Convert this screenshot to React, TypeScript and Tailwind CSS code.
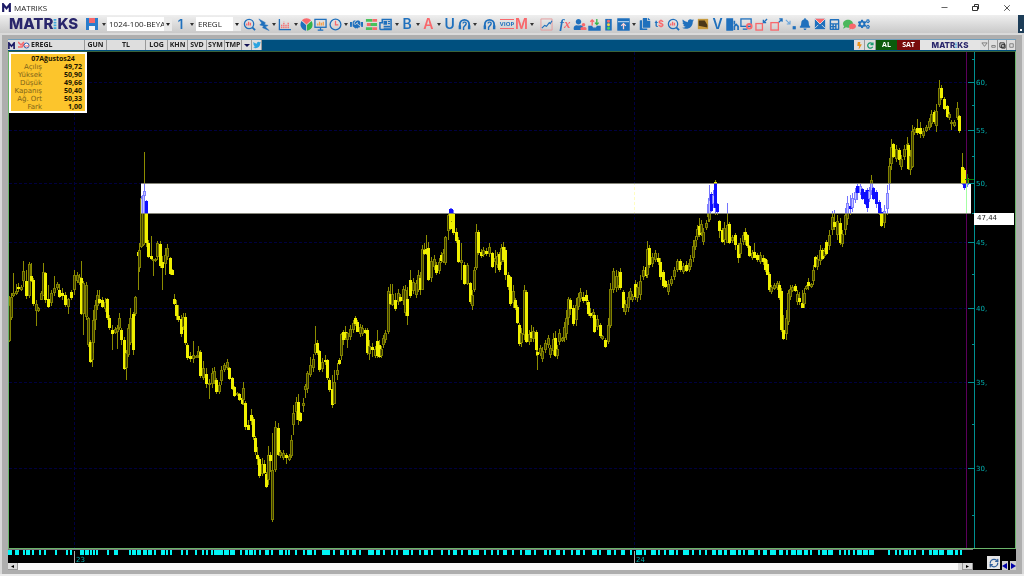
import clsx from 'clsx'
import type { ReactNode } from 'react'
import {
  FaHandshake,
  FaUser,
  FaTwitter,
  FaBell,
  FaCalculator,
  FaComment,
  FaCogs,
  FaCopy,
  FaBolt,
} from 'react-icons/fa'
import { RefreshCw, Minus, X } from 'lucide-react'

const BLUE = '#1f70bd'
const RED = '#f8686c'

// x high low [bodyTop bodyBottom [f = filled]]
const SERIES = `
9 296 342 305 341;11 293 320 297 318;13 273 297 293 296;16 284 295 291 294;18 283 292 287 289 f;21 285 291;23 261 287 271 281
26 270 299 281 296 f;29 262 298 264 296;31 263 282 276 281 f;33 278 306 280 304 f;36 300 326 304 311;38 307 312;41 291 300 293 300
43 263 295 272 296;45 272 303 273 300 f;48 285 308 299 307 f;51 290 306 293 303;54 276 296 288 293;57 282 290;59 284 298 290 297 f
62 288 300 293 296 f;65 292 307 295 305 f;68 298 314 299 307;71 290 300 292 298 f;74 270 295 275 290;77 272 283;79 274 285
81 261 315 278 314 f;83 281 335 283 314;86 282 320 285 317;88 317 347 318 345;90 340 363 342 362 f;92 333 367;93 310 353 320 343
95 300 330 305 320;97 290 310;99 290 304 299 303 f;102 297 308 300 307 f;105 298 312;107 298 320 299 318 f;109 315 330 318 328 f
112 325 350 330 334 f;115 327 334;117 325 349 328 332;119 313 330 318 328;121 328 345 330 340 f;124 337 370 340 369 f
126 350 380 353 368;128 324 357 328 355;130 308 345 318 343;133 312 355 314 350 f;135 296 316 297 314
138 250 290 252 256 f;139 243 272 250 268;141 196 248 198 247;143 193 246 195 245;144 152 197 191 196;146 200 247 201 243 f
148 240 258 243 257 f;151 236 260 256 259 f;153 259 276 259 261;155 258 262;157 241 260 243 257;160 241 268 244 266 f
162 256 290 262 268 f;165 248 275 255 264;167 244 260;170 257 275 258 274 f;172 269 275 270 275 f;174 294 305 299 304 f
176 300 320 305 316 f;178 305 322 316 320 f;181 315 337 319 334 f;183 313 330;185 313 345 317 343 f;187 343 360 345 358 f
190 352 362 356 359 f;193 341 363 355 359;196 355 357;198 346 358 351 356;200 350 378 352 376 f;203 361 380 368 378
206 368 388 374 384 f;209 379 399 383 385;212 368 388 373 384;214 367 384;216 378 394 380 392 f;219 382 394;221 366 385 370 381
224 363 372;227 359 370;229 367 380 368 379 f;232 377 390 378 389 f;234 386 397 387 396 f;237 392 396;239 393 401 394 400 f
242 397 405 398 404 f;243 382 405;245 401 430 403 427 f;248 420 430 425 430 f;251 409 425 415 421 f;253 417 440 419 437 f
255 436 455 438 452 f;257 447 465 455 459 f;259 457 478 459 476 f;262 458 476 464 474;264 460 474 464 473 f;266 472 488 474 487 f
268 446 485 455 480;270 452 472 455 461 f;272 433 522 470 520;275 421 472 427 470;278 423 456 428 455 f;280 450 458;283 450 460
286 453 464 455 458 f;289 454 461;291 435 458 440 456;293 405 435 413 425;296 397 420 402 412;298 394 425 402 420 f
300 412 422 413 421 f;303 398 412 403 406;305 384 398 386 390;307 371 393 373 389;310 357 377 365 375;313 354 372;315 326 355 344 353
317 340 355 343 353 f;319 350 372 351 370 f;322 358 372;325 355 365 360 362 f;327 359 380 360 378 f;329 378 392 380 390 f
332 375 408 389 405 f;334 370 404 382 404;337 363 380 370 375;339 358 365 360 364 f;341 333 360 334 356;343 330 345 332 340 f
345 326 340 332 338 f;347 332 348 333 340;350 325 340;353 320 333;355 316 326 318 324 f;357 320 332 322 332 f;360 324 337
362 325 336;365 328 334 330 333 f;367 328 355 330 353 f;369 340 360 346 354;372 343 357 347 350 f;375 346 358 349 356
377 330 358 341 356 f;379 340 358 345 357 f;381 346 358;383 335 348;385 330 343;388 287 334 291 332;390 284 305 294 304 f
392 284 306 294 305;395 293 311 300 309 f;398 289 305;400 294 302 297 301 f;403 286 305 289 301;405 285 316 290 313
407 287 325 299 316 f;410 270 298 280 296 f;413 278 294;416 280 298 283 295;418 270 292 275 290;420 272 295 278 290 f
422 245 290 249 290;424 243 255 250 254 f;426 235 255 249 254 f;428 242 281 248 280 f;431 257 282 261 278;434 255 270
436 262 275 265 273 f;439 258 274;441 252 263 255 261 f;443 249 263 253 262;445 236 265 237 263;448 213 240 215 231
450 208 230 209 229 f;451 208 222 209 221 f;453 210 235 213 233 f;456 228 243 232 241 f;458 237 263 240 262 f;461 243 280 260 263
464 262 285 265 284 f;467 263 285 265 284;470 282 304 283 302 f;472 290 310;474 267 292 270 290;476 224 270 232 268
478 230 255 232 253 f;481 249 258 252 256 f;483 247 257;486 248 256 251 254 f;489 243 257;492 252 268 253 267 f;495 250 273 258 262
497 252 268;499 252 272 254 270 f;501 244 265 248 262;503 242 262 247 260 f;505 247 280 250 275 f;508 272 290 275 287 f
510 276 306 277 304 f;513 285 308;515 298 310 300 308 f;517 305 324 307 323 f;519 323 346 325 344 f;521 328 347;524 285 340 290 335
526 290 343 292 342 f;529 330 345;531 325 342 332 338 f;533 327 342;536 330 356 332 350 f;537 350 370 352 355 f;540 345 356;542 347 362
545 340 353;548 335 348;550 345 358;553 333 355;555 331 357 338 356 f;557 345 359;559 329 345;562 337 342;564 322 342;566 310 340
568 297 325 299 318;570 298 315 300 309 f;573 305 326 308 324 f;576 298 326;578 293 310;580 288 302;583 292 303 297 301 f
586 290 305 295 301 f;588 300 316 302 314 f;590 308 318 313 316 f;593 309 320;594 313 333 315 332 f;597 315 330;600 323 338 325 336 f
602 335 340;605 338 348 340 347 f;608 318 344 325 342;610 283 328 289 326;613 268 293 271 290;616 270 292;618 271 290
620 268 290 272 288 f;623 290 312 292 308 f;625 300 315;628 292 312;630 288 300;632 294 302;635 280 300 284 297 f;637 282 302
640 275 300;643 266 280;646 262 278 267 276 f;647 241 278 249 275;649 245 268 248 265 f;652 253 267;655 250 262;658 253 265 258 262 f
660 258 280 262 277 f;663 270 288 272 286 f;665 280 288 281 287 f;668 280 295;671 276 286;674 267 280;677 259 272 261 270
680 259 272 261 270 f;683 263 274;686 261 272 265 271 f;689 260 272;690 255 270;693 240 262;695 236 250;697 225 240
699 218 237 226 235 f;701 220 236;703 228 245;706 220 230;708 198 222;709 185 222 200 220;711 192 212 194 211 f;713 190 208
715 180 215 182 208 f;717 203 215 204 212 f;719 220 238 221 231 f;722 228 243 230 242 f;724 222 245;727 203 243 225 243
729 222 244 224 243 f;732 235 243;735 233 250 235 245 f;738 243 263 245 258 f;740 238 258;743 232 245;745 228 245 232 240 f
747 234 248 235 246 f;749 245 257 246 256 f;752 250 260;754 243 258 252 258 f;757 253 262 255 260 f;760 252 264;763 255 265 258 262 f
765 258 272 259 270 f;767 260 275 264 275 f;769 272 292 274 290 f;771 285 294;774 283 290;777 281 290;779 281 300 285 298 f
781 288 332 291 330 f;783 315 340 330 339 f;786 310 340;788 290 325 293 322;790 285 300;792 285 292;795 284 292 286 291 f;797 290 305
799 292 305 298 302 f;802 290 308 303 308 f;804 288 308;806 285 290;808 278 290 282 286 f;811 283 288;813 265 285;815 256 268 257 267 f
817 255 270;820 245 265;822 248 260 250 259 f;824 248 258;826 240 255 242 254 f;829 230 250;832 211 235;834 210 230 222 227 f
837 215 240;840 218 245 223 243 f;842 230 247;845 208 235;847 196 225;850 195 215 206 209 f;852 193 212;855 188 203
857 183 200 186 193 f;860 183 195;862 188 200 189 199 f;865 190 205 192 204 f;867 188 212 190 208 f;869 187 202;871 175 195
873 187 200 188 199 f;876 190 208 192 204 f;879 200 215 202 214 f;881 208 227 212 226 f;884 205 228;887 185 215;889 158 190;891 139 170
893 143 158 144 157 f;896 145 162;899 148 165 150 160 f;901 155 170;904 145 160;907 137 155 144 150;908 143 170 145 169 f;910 150 175
912 125 168 131 167;914 127 135;917 119 135 128 133 f;920 122 138 128 134 f;923 128 138;926 125 132;929 118 130;931 110 127
934 110 124 112 122 f;936 104 132;939 80 107 88 105;941 85 100 88 98 f;944 97 110 99 109 f;947 105 118 106 117 f;949 112 120
951 120 130 122 124;954 120 127;957 102 120 108 118;959 115 133 116 131 f;962 153 185 167 183 f;964 168 190 170 188 f;967 175 187
`

const candles = SERIES.trim()
  .split(/[;\n]/)
  .map((row) => {
    const p = row.split(' ')
    const [x, high, low] = p.map(Number)
    const h = low - high
    return {
      x,
      high,
      low,
      top: p[3] ? Number(p[3]) : high + Math.round(h * 0.25),
      bottom: p[4] ? Number(p[4]) : low - Math.round(h * 0.2),
      filled: p[5] === 'f',
    }
  })

const levels = [
  { y: 82, label: '60,' },
  { y: 130, label: '55,' },
  { y: 183, label: '50,' },
  { y: 242, label: '45,' },
  { y: 308, label: '40,' },
  { y: 382, label: '35,' },
  { y: 468, label: '30,' },
]
const minorTicks = [59, 105, 156, 213, 274, 344, 424, 515]

// start-end of each session marker on the time strip
const sessions =
  '8-12 15-19 23-25 26-30 32-34 39-41 44-46 55-57 66-68 70-72 80-84 85-89 90-92 93-95 96-98 107-109 114-118 129-131 132-136 137-141 143-147 148-152 154-156 161-165 166-168 170-172 181-183 186-188 195-197 202-204 206-208 211-213 214-223 224-229 230-235 240-242 245-248 249-253 254-256 259-261 265-269 271-273 279-283 285-287 288-290 295-297 303-305 307-312 314-316 322-330 333-335 340-344 347-349 352-356 359-361 368-374 376-380 383-385 391-393 396-398 403-409 411-413 419-421 424-428 431-433 441-443 448-450 453-457 461-463 468-471 473-479 484-486 491-493 497-499 503-507 512-514 520-522 525-531 534-536 544-547 549-551 556-560 563-565 571-573 576-580 583-585 592-597 599-601 607-611 614-616 621-625 630-632 636-642 644-646 651-656 658-660 664-666 669-674 676-678 683-689 692-694 699-701 705-707 712-716 718-722 724-727 730-736 738-741 743-745 748-754 758-760 763-767 770-776 779-783 786-788 791-796 797-802 804-808 810-812 818-820 822-827 828-833 839-841 844-846 848-850 853-855 857-862 863-868 869-874 888-890 895-897 899-901 904-908 909-911 914-916 922-924 929-932 933-938 939-944 947-953 955-958 960-962'
    .split(' ')
    .map((s) => s.split('-').map(Number))

const quote = [
  ['Açılış', '49,72'],
  ['Yüksek', '50,90'],
  ['Düşük', '49,66'],
  ['Kapanış', '50,40'],
  ['Ağ. Ort', '50,33'],
  ['Fark', '1,00'],
]

const Glyph = ({ children }: { children: ReactNode }) => (
  <svg viewBox="0 0 14 14" className="size-[13px]" fill="none" stroke={BLUE} strokeWidth="1.4">
    {children}
  </svg>
)

const Letter = ({ children, className }: { children: ReactNode; className?: string }) => (
  <span className={clsx('font-["Inter"] text-[14px] leading-[14px] font-semibold text-[#1f70bd]', className)}>{children}</span>
)

const Headset = () => (
  <Glyph>
    <path d="M2 10V7a5 5 0 0 1 10 0v3" strokeWidth="2" />
    <path d="M2 8v4M12 8v4" strokeWidth="2.600" />
    <path d="M5.500 6q0-2 2-1.500T8.500 7L6 10v3" strokeWidth="1.500" />
  </Glyph>
)

const Magnifier = () => (
  <Glyph>
    <circle cx="6.5" cy="6.5" r="5" />
    <path d="M10 10l3 3" strokeWidth="2" />
    <path d="M4 8V6M6 8V4M8 8V5" stroke={RED} />
  </Glyph>
)

type Tool = { label: string; icon: ReactNode; menu?: boolean }

const chartTools: Tool[] = [
  { label: 'İncele', icon: <Magnifier /> },
  {
    label: 'Çizim',
    menu: true,
    icon: (
      <Glyph>
        <path d="M2 1l7 4-1 2 4 1-3 1.500 4 4-7-3 1-2-4-1 2-2z" fill={BLUE} strokeWidth="0.500" />
      </Glyph>
    ),
  },
  {
    label: 'Gösterge',
    menu: true,
    icon: (
      <Glyph>
        <path d="M1.5 1v11.5H14" />
        <path d="M4 11V7M6.3 11V4M8.6 11V7M11 11V5" stroke={RED} strokeDasharray="1.5 0.7" />
      </Glyph>
    ),
  },
  {
    label: 'Dağılım',
    icon: (
      <svg viewBox="0 0 14 14" className="size-[13px]">
        <path d="M7 7L2 2.5a7 7 0 0 1 10 0z" fill={RED} />
        <path d="M6.5 7.5L1.6 3.2a7 7 0 0 0 4.9 10.6z" fill={BLUE} />
        <path d="M7.5 7.5l5-4.3a7 7 0 0 1-5 10.6z" fill="#34b44a" />
      </svg>
    ),
  },
  {
    label: 'Ekran',
    icon: (
      <Glyph>
        <rect x="1" y="1.5" width="12" height="8.5" />
        <path d="M4 13h6M7 10v3" />
        <path d="M4 8V6M6 8V4M8 8V5M10 8V4" stroke="#f3a04c" />
      </Glyph>
    ),
  },
  {
    label: 'Periyot',
    menu: true,
    icon: (
      <Glyph>
        <circle cx="7" cy="7" r="5.8" />
        <path d="M7 3v4.5h3" stroke={RED} />
      </Glyph>
    ),
  },
  { label: 'Anlaşma', icon: <FaHandshake size={13} color={BLUE} /> },
  {
    label: 'Derinlik',
    icon: (
      <svg viewBox="0 0 14 14" className="size-[13px]">
        <path d="M1 1h7v3H1zM5 5.500h8v3H5zM1 10h7v3H1z" fill="#49c25b" />
        <path d="M8 1h5v3H8zM2 5.500h4v3H2zM8 10h5v3H8z" fill={RED} />
      </svg>
    ),
  },
  {
    label: 'Haber',
    menu: true,
    icon: (
      <Glyph>
        <path d="M3.500 1.500h9.500v11H2q-1 0-1-1V5h2.500z" strokeWidth="1.600" />
        <path d="M5.500 4h2.500v2.500H5.500z" fill={BLUE} />
        <path d="M9.500 4H12M9.500 6H12M5 9h7M5 11h7" />
      </Glyph>
    ),
  },
  { label: 'B', menu: true, icon: <Letter>B</Letter> },
  { label: 'A', menu: true, icon: <Letter className="text-[#f8686c]">A</Letter> },
  { label: 'U', icon: <Letter>U</Letter> },
  { label: 'Destek', menu: true, icon: <Headset /> },
]

const marketTools: Tool[] = [
  {
    label: 'VIOP',
    icon: (
      <span className="border-y border-[#f8686c] font-['Open_Sans'] text-[6px] leading-[8px] font-bold text-[#1f70bd]">
        VIOP
      </span>
    ),
  },
  { label: 'M', menu: true, icon: <Letter className="text-[12px] font-extrabold text-[#f8686c]">M</Letter> },
]

const appTools: Tool[] = [
  {
    label: 'Fonksiyon',
    icon: (
      <span className="font-['Liberation_Serif'] text-[13px] leading-[14px] font-bold text-[#1f70bd] italic">
        f<span className="text-[#f8686c]">x</span>
      </span>
    ),
  },
  {
    label: 'Kullanıcılar',
    icon: (
      <span className="flex items-end">
        <FaUser size={11} color={BLUE} className="shrink-0" />
        <FaUser size={7} color={RED} className="-ml-[4px] shrink-0" />
      </span>
    ),
  },
  {
    label: 'Aktar',
    icon: (
      <Glyph>
        <path d="M1 9h3l1 2h4l1-2h3v4H1z" fill={BLUE} />
        <path d="M4.5 8V2M2.5 4l2-2 2 2" stroke={RED} />
        <path d="M9.5 1v6M7.5 5l2 2 2-2" stroke="#34b44a" />
      </Glyph>
    ),
  },
  {
    label: 'Sinyal',
    icon: (
      <svg viewBox="0 0 14 14" className="size-[13px]">
        <rect x="3.500" y="1" width="7" height="12.500" fill={BLUE} />
        <circle cx="7" cy="3.500" r="1.600" fill={RED} />
        <circle cx="7" cy="7.200" r="1.600" fill="#ffd23c" />
        <circle cx="7" cy="11" r="1.600" fill="#49d25b" />
      </svg>
    ),
  },
  {
    label: 'Yükle',
    menu: true,
    icon: (
      <Glyph>
        <rect x="1" y="1" width="12" height="12" fill={BLUE} />
        <path d="M1 4h12" stroke="#dceaf8" strokeWidth="1" />
        <path d="M7 12V6M4.5 8.5L7 6l2.500 2.500" stroke="#ffd3d3" />
      </Glyph>
    ),
  },
  { label: 'Kopyala', icon: <FaCopy size={12} color={BLUE} /> },
  {
    label: 'Çevir',
    icon: (
      <span className="font-['Inter'] text-[9px] leading-[14px] font-bold text-[#1f70bd]">
        t<span className="text-[#f8686c]">$</span>
      </span>
    ),
  },
  { label: 'Ara', icon: <Magnifier /> },
  { label: 'Twitter', icon: <FaTwitter size={12} color={BLUE} /> },
  {
    label: 'Altın',
    icon: (
      <svg viewBox="0 0 14 14" className="size-[12px]">
        <path d="M1 1h12v12H1z" fill="#c79a3e" />
        <path d="M2 9V3h7l3 5v3z" fill="#4a3818" />
      </svg>
    ),
  },
  { label: 'V', icon: <Letter className="text-[13px] font-extrabold">V</Letter> },
  {
    label: 'Şirket',
    icon: (
      <Glyph>
        <path d="M1 1h6v12H1z" fill={BLUE} />
        <path d="M9 3v4M9 13V9l2-2 2 2v4" strokeWidth="1.800" />
      </Glyph>
    ),
  },
  {
    label: 'Kayıt',
    icon: (
      <Glyph>
        <rect x="1" y="1" width="11" height="8" />
        <path d="M3 12h5" />
        <circle cx="10" cy="9" r="2.500" stroke={RED} strokeWidth="2" />
      </Glyph>
    ),
  },
  {
    label: 'Küçült',
    icon: (
      <Glyph>
        <rect x="1" y="6" width="7" height="7" stroke={RED} />
        <path d="M13 1L9.500 4.500M9 2v3h3" />
      </Glyph>
    ),
  },
  {
    label: 'Büyüt',
    icon: (
      <Glyph>
        <rect x="1" y="5" width="8" height="8" stroke={RED} />
        <path d="M9.500 4.500L13 1M10 1h3v3" />
      </Glyph>
    ),
  },
  {
    label: 'Taşı',
    icon: (
      <Glyph>
        <path d="M2 2l4 4M6.500 3v3.500H3" stroke="#6aa5dc" strokeWidth="1.200" />
        <rect x="10" y="9.500" width="2" height="2" fill={BLUE} />
      </Glyph>
    ),
  },
  { label: 'Alarm', icon: <FaBell size={12} color={BLUE} /> },
  {
    label: 'Mesaj',
    icon: (
      <svg viewBox="0 0 14 14" className="size-[12px]">
        <path d="M1 1h12v12H1z" fill={BLUE} />
        <path d="M1 1h12L7 7z" fill={RED} />
        <path d="M1 1l6 6 6-6M1 12l4-4M13 12L9 8" stroke="#e8e8e8" fill="none" />
      </svg>
    ),
  },
  { label: 'Hesap', icon: <FaCalculator size={11} color={BLUE} /> },
  {
    label: 'Sohbet',
    icon: (
      <span className="flex items-start">
        <FaComment size={10} color="#4cb85c" className="shrink-0" />
        <FaComment size={7} color={RED} className="mt-[4px] -ml-[4px] shrink-0" />
      </span>
    ),
  },
  { label: 'Ayarlar', icon: <FaCogs size={12} color={BLUE} /> },
]

const Caret = ({ label }: { label: string }) => (
  <button aria-label={label} className="flex w-[6px] shrink-0 justify-center">
    <svg viewBox="0 0 4 3" className="h-[3px] w-[4px]">
      <path d="M0 0h4L2 3z" fill="#333" />
    </svg>
  </button>
)

const Tools = ({ items, className }: { items: Tool[]; className: string }) => (
  <div className={clsx('flex shrink-0 items-center justify-between', className)}>
    {items.map(({ label, icon, menu }) => (
      <div key={label} className="contents">
        <button aria-label={label} className="flex h-[14px] w-[14px] shrink-0 items-center justify-center">
          {icon}
        </button>
        {menu && <Caret label={`${label} menüsü`} />}
      </div>
    ))}
  </div>
)

const Logo = ({ small }: { small?: boolean }) => (
  <span
    className={clsx(
      'flex items-center font-["Inter"] font-extrabold text-[#29266b]',
      small ? 'text-[8px] leading-[10px]' : 'text-[15px] leading-[16px]',
    )}
  >
    MATR
    <svg viewBox="0 0 4 12" className={small ? 'h-[7px] w-[2px]' : 'h-[11px] w-[4px]'}>
      <path d="M2 0v12" stroke="#3fa9e0" strokeWidth="3" strokeDasharray="2 1" />
    </svg>
    KS
  </span>
)

const MMark = ({ className }: { className: string }) => (
  <svg viewBox="0 0 10 10" className={className}>
    <path d="M1.300 10V1.500L5 6l3.700-4.500V10" fill="none" stroke="#1d1b66" strokeWidth="2.400" />
  </svg>
)

const Picker = ({ label, value, className }: { label: string; value: string; className: string }) => (
  <label className={clsx('flex h-[14px] shrink-0 items-center bg-white', className)}>
    <select
      aria-label={label}
      defaultValue={value}
      className="h-[14px] min-w-0 flex-1 appearance-none overflow-hidden pl-[2px] text-[8px] leading-[14px] text-clip text-[#222]"
    >
      <option>{value}</option>
    </select>
    <span className="flex h-full w-[8px] items-center justify-center bg-[#e9e9e9]">
      <svg viewBox="0 0 4 3" className="h-[3px] w-[4px]">
        <path d="M0 0h4L2 3z" fill="#222" />
      </svg>
    </span>
  </label>
)

const TitleBar = () => (
  <header className="flex h-[15px] items-center bg-white pr-[12px] pl-[2px]">
    <MMark className="size-[9px]" />
    <h1 className="ml-[3px] flex-1 text-[8px] leading-[12px] text-[#222]">MATRIKS</h1>
    <div className="flex items-center gap-[22px] text-[#333]">
      <button aria-label="Simge durumuna küçült">
        <Minus size={9} strokeWidth={2} />
      </button>
      <button aria-label="Önceki boyut">
        <svg viewBox="0 0 9 9" className="size-[9px]" fill="none" stroke="#333">
          <path d="M1.500 3.500h5v4h-5zM3.500 3V1.500h4v4.500H7" />
        </svg>
      </button>
      <button aria-label="Kapat">
        <X size={10} strokeWidth={2} />
      </button>
    </div>
  </header>
)

const Toolbar = () => (
  <div className="flex h-[18px] items-center bg-gradient-to-b from-[#efefef] to-[#c9c9c9] pl-[9px]">
    <div className="w-[77px] shrink-0">
      <Logo />
    </div>
    <button aria-label="Kaydet" className="shrink-0">
      <svg viewBox="0 0 12 12" className="size-[12px]">
        <path d="M0 0h12v12H0z" fill="#2a7dcc" />
        <path d="M3 0h6v5H3z" fill={RED} />
        <path d="M3 8h6v4H3z" fill="#f4f4f4" />
      </svg>
    </button>
    <div className="flex w-[9px] justify-end">
      <Caret label="Kaydet menüsü" />
    </div>
    <Picker label="Sayfa" value="1024-100-BEYA" className="w-[65px]" />
    <button className="w-[17px] shrink-0 font-['Inter'] text-[13px] leading-[14px] font-semibold text-[#1f70bd]">1</button>
    <Caret label="Sayfa sayısı" />
    <Picker label="Sembol" value="EREGL" className="ml-[1px] w-[45px]" />
    <Tools items={chartTools} className="ml-[1px] w-[236px]" />
    <Tools items={[{ label: 'Canlı destek', icon: <Headset /> }]} className="ml-[4px]" />
    <Tools items={marketTools} className="ml-[4px] w-[35px]" />
    <Tools
      items={[
        {
          label: 'Grafik',
          icon: (
            <Glyph>
              <path d="M1 1v12h12V1z" stroke="#e59a9c" strokeWidth="1" />
              <path d="M2 11l3-3 2 1 3-4 1 1 2-3" strokeWidth="1.200" />
            </Glyph>
          ),
        },
      ]}
      className="ml-[4px]"
    />
    <Tools items={appTools} className="ml-[5px] w-[313px]" />
    <div className="ml-auto flex h-full w-[6px] items-end justify-center bg-[#1d3d58] pb-[2px]">
      <span className="size-[2px] bg-white" />
    </div>
  </div>
)

const cell =
  'flex h-[10px] shrink-0 items-center justify-center border-r border-[#999] bg-[#dedede] text-[7px] leading-[10px] font-bold text-[#222]'

const ChartHeader = () => (
  <div className="flex h-[12px] items-start border-t border-[#6f9fbe] bg-[#00507f]">
    <div className={clsx(cell, 'w-[77px] justify-start! gap-[1px]')}>
      <MMark className="mr-[2px] size-[7px]" />
      <svg viewBox="0 0 12 8" className="h-[8px] w-[12px]">
        <path d="M0 1l3 3 3-3M0 6h4l2-3" stroke={RED} strokeWidth="1.500" fill="none" />
        <circle cx="8.500" cy="4.500" r="2.500" fill="#fff" stroke="#2c56a6" />
        <path d="M7 5h4" stroke={RED} />
      </svg>
      EREGL
    </div>
    <button className={clsx(cell, 'w-[22px]')}>GUN</button>
    <button className={clsx(cell, 'w-[39px]')}>TL</button>
    <button className={clsx(cell, 'w-[22px]')}>LOG</button>
    <button className={clsx(cell, 'w-[20px]')}>KHN</button>
    <button className={clsx(cell, 'w-[19px]')}>SVD</button>
    <button className={clsx(cell, 'w-[18px]')}>SYM</button>
    <button className={clsx(cell, 'w-[17px]')}>TMP</button>
    <button aria-label="Menü" className={clsx(cell, 'w-[10px]')}>
      <svg viewBox="0 0 6 3" className="h-[3px] w-[6px]">
        <path d="M0 0h6L3 3z" fill="#111155" />
      </svg>
    </button>
    <button aria-label="Paylaş" className={clsx(cell, 'w-[10px]')}>
      <FaTwitter size={8} color="#2aa3e0" />
    </button>
    <div className="flex-1" />
    <button aria-label="Hızlı emir" className={clsx(cell, 'w-[11px]')}>
      <FaBolt size={7} color="#e8941a" />
    </button>
    <button aria-label="Yenile" className={clsx(cell, 'w-[11px]')}>
      <svg viewBox="0 0 8 8" className="size-[7px]" fill="none" stroke="#169a70" strokeWidth="1.500">
        <path d="M6.500 5.500a3 3 0 1 1-.5-3.500M6.800.5v2.500H4" />
      </svg>
    </button>
    <button className="h-[10px] w-[21px] shrink-0 bg-[#0c5a0c] text-[7px] leading-[10px] font-bold text-white">AL</button>
    <button className="h-[10px] w-[23px] shrink-0 bg-[#780c0c] text-[7px] leading-[10px] font-bold text-white">SAT</button>
    <div className="flex h-[10px] w-[60px] shrink-0 items-center justify-center bg-[#e4e4e4]">
      <Logo small />
    </div>
    {['M1 1h6L4 5z', 'M2 4h4v2H2z', 'M1 1h5v5H1zM3 3h4v4H3z', 'M2 2h4v4H2z'].map((d, i) => (
      <button key={d} aria-label={`Pencere ${i + 1}`} className={clsx(cell, 'w-[9px]')}>
        <svg viewBox="0 0 8 8" className="size-[7px]" fill="none" stroke={i === 2 ? '#222' : '#777'}>
          <path d={d} />
        </svg>
      </button>
    ))}
  </div>
)

const QuoteBox = () => (
  <table
    aria-label="EREGL günlük özet"
    className="absolute top-0 left-0 w-[78px] border-separate border-spacing-0 border-2 border-white bg-[#fcc52c] text-[7px] leading-[8px] text-[#1a1400]"
  >
    <thead>
      <tr className="h-[9px]">
        <th colSpan={2} className="p-0 pl-[10px] text-center font-bold">
          07Ağustos24
        </th>
      </tr>
    </thead>
    <tbody>
      {quote.map(([name, value]) => (
        <tr key={name} className="h-[8px]">
          <th scope="row" className="w-[31px] p-0 text-right font-['DejaVu_Sans'] font-normal text-[#80641a]">
            {name}
          </th>
          <td className="p-0 pr-[3px] text-right font-bold">{value}</td>
        </tr>
      ))}
    </tbody>
  </table>
)

const PriceChart = () => (
  <svg viewBox="9 52 1006 496" className="block h-auto w-full bg-black" role="img" aria-label="EREGL günlük fiyat grafiği">
    <rect x="9" y="52" width="1006" height="496" fill="#000" />
    <g stroke="#000040" strokeDasharray="3 2" shapeRendering="crispEdges">
      {levels.map(({ y }) => (
        <path key={y} d={`M9 ${y + 0.5}H974`} />
      ))}
      <path d="M74.5 52V548M634.5 52V548" />
    </g>
    <g shapeRendering="crispEdges">
      {candles.map(({ x, high, low, top, bottom, filled }, i) => (
        <g key={i}>
          <rect x={x} y={high} width="1" height={low - high} fill="#8c8c00" />
          <rect x={x - 1} y={top} width="3" height={Math.max(bottom - top, 2)} fill={filled ? '#f0f000' : '#808000'} />
          {!filled && <rect x={x} y={top + 1} width="1" height={Math.max(bottom - top - 2, 0)} fill="#3c3c00" />}
        </g>
      ))}
      <rect x="966" y="52" width="1" height="496" fill="#5c005c" />
      <path d="M967.5 174V183M965 179.5H974" stroke="#008000" />
      {/* highlighted price zone inverts everything under it */}
      <rect x="141" y="183" width="830" height="30" fill="#fff" className="mix-blend-difference" />
      <path d="M141 183.5H971M141 213.500H971" stroke="#85857a" />
      <rect x="974" y="52" width="1" height="496" fill="#009090" />
      {levels.map(({ y }) => (
        <rect key={y} x="968" y={y} width="6" height="1" fill="#009090" />
      ))}
      {minorTicks.map((y) => (
        <rect key={y} x="972" y={y} width="2" height="1" fill="#009090" />
      ))}
      <rect x="974" y="213" width="40" height="12" fill="#fff" />
    </g>
    <g className="font-['DejaVu_Sans'] text-[7px]" fill="#00b0b0">
      {levels.map(({ y, label }) => (
        <text key={y} x="976" y={y + 3}>
          {label}
        </text>
      ))}
      <text x="977" y="220" fill="#222">
        47,44
      </text>
    </g>
  </svg>
)

const TimeStrip = () => (
  <svg viewBox="8 549 965 14" className="block h-auto w-full bg-black" role="img" aria-label="Zaman ekseni">
    <path d="M8 549.500H973" stroke="#777" />
    <g fill="#00f4f4" shapeRendering="crispEdges">
      {sessions.map(([from, to]) => (
        <rect key={from} x={from} y="550" width={to - from} height="5" />
      ))}
    </g>
    <path d="M74.500 551V563M634.500 551V563" stroke="#aaa" />
    <g className="font-['DejaVu_Sans'] text-[7px]" fill="#00b0b0">
      <text x="76" y="562">
        23
      </text>
      <text x="636" y="562">
        24
      </text>
    </g>
  </svg>
)

const ScrollBar = () => (
  <div className="flex h-[7px] bg-[#fafafa]">
    <button aria-label="Sola kaydır" className="flex w-[10px] items-center justify-center border-r border-b border-[#999] bg-[#dcdcdc]">
      <svg viewBox="0 0 3 3" className="size-[3px]">
        <path d="M3 0v3L0 1.500z" />
      </svg>
    </button>
    <div className="flex-1" />
    <div className="w-[5px] border-r border-[#999] bg-[#dcdcdc]" />
    <button aria-label="Sağa kaydır" className="flex w-[10px] items-center justify-center border-r border-b border-[#999] bg-[#dcdcdc]">
      <svg viewBox="0 0 3 3" className="size-[3px]">
        <path d="M0 0v3l3-1.500z" />
      </svg>
    </button>
  </div>
)

export default function App() {
  return (
    <div className="bg-[#ececec] pb-[2px] font-['Open_Sans',sans-serif]">
      <TitleBar />
      <Toolbar />
      <main className="border-x-2 border-t-2 border-x-[#d8d8d8] border-t-[#dadada] bg-[#aeaeae] px-[6px] pt-[4px] pb-[4px]">
        <ChartHeader />
        <section className="relative border border-[#6bb56b] border-t-[#3a633a] bg-black">
          <PriceChart />
          <QuoteBox />
        </section>
        <div className="flex bg-black">
          <div className="min-w-0 flex-1">
            <TimeStrip />
            <ScrollBar />
          </div>
          <div className="flex w-[43px] items-end justify-end gap-[2px]">
            <button aria-label="Veriyi yenile" className="mb-[1px] flex size-[13px] items-center justify-center bg-[#e6e6e6]">
              <RefreshCw size={10} strokeWidth={3} color="#2f5f9c" />
            </button>
            <button aria-label="Önceki" className="flex h-[9px] w-[6px] items-center bg-[#cfcfcf]">
              <svg viewBox="0 0 6 6" className="size-[6px]">
                <path d="M5 0v6L0 3z" fill="#0000a8" />
              </svg>
            </button>
            <button aria-label="Sonraki" className="flex h-[9px] w-[6px] items-center bg-[#cfcfcf]">
              <svg viewBox="0 0 6 6" className="size-[6px]">
                <path d="M1 0v6l5-3z" fill="#0000a8" />
              </svg>
            </button>
          </div>
        </div>
      </main>
    </div>
  )
}
